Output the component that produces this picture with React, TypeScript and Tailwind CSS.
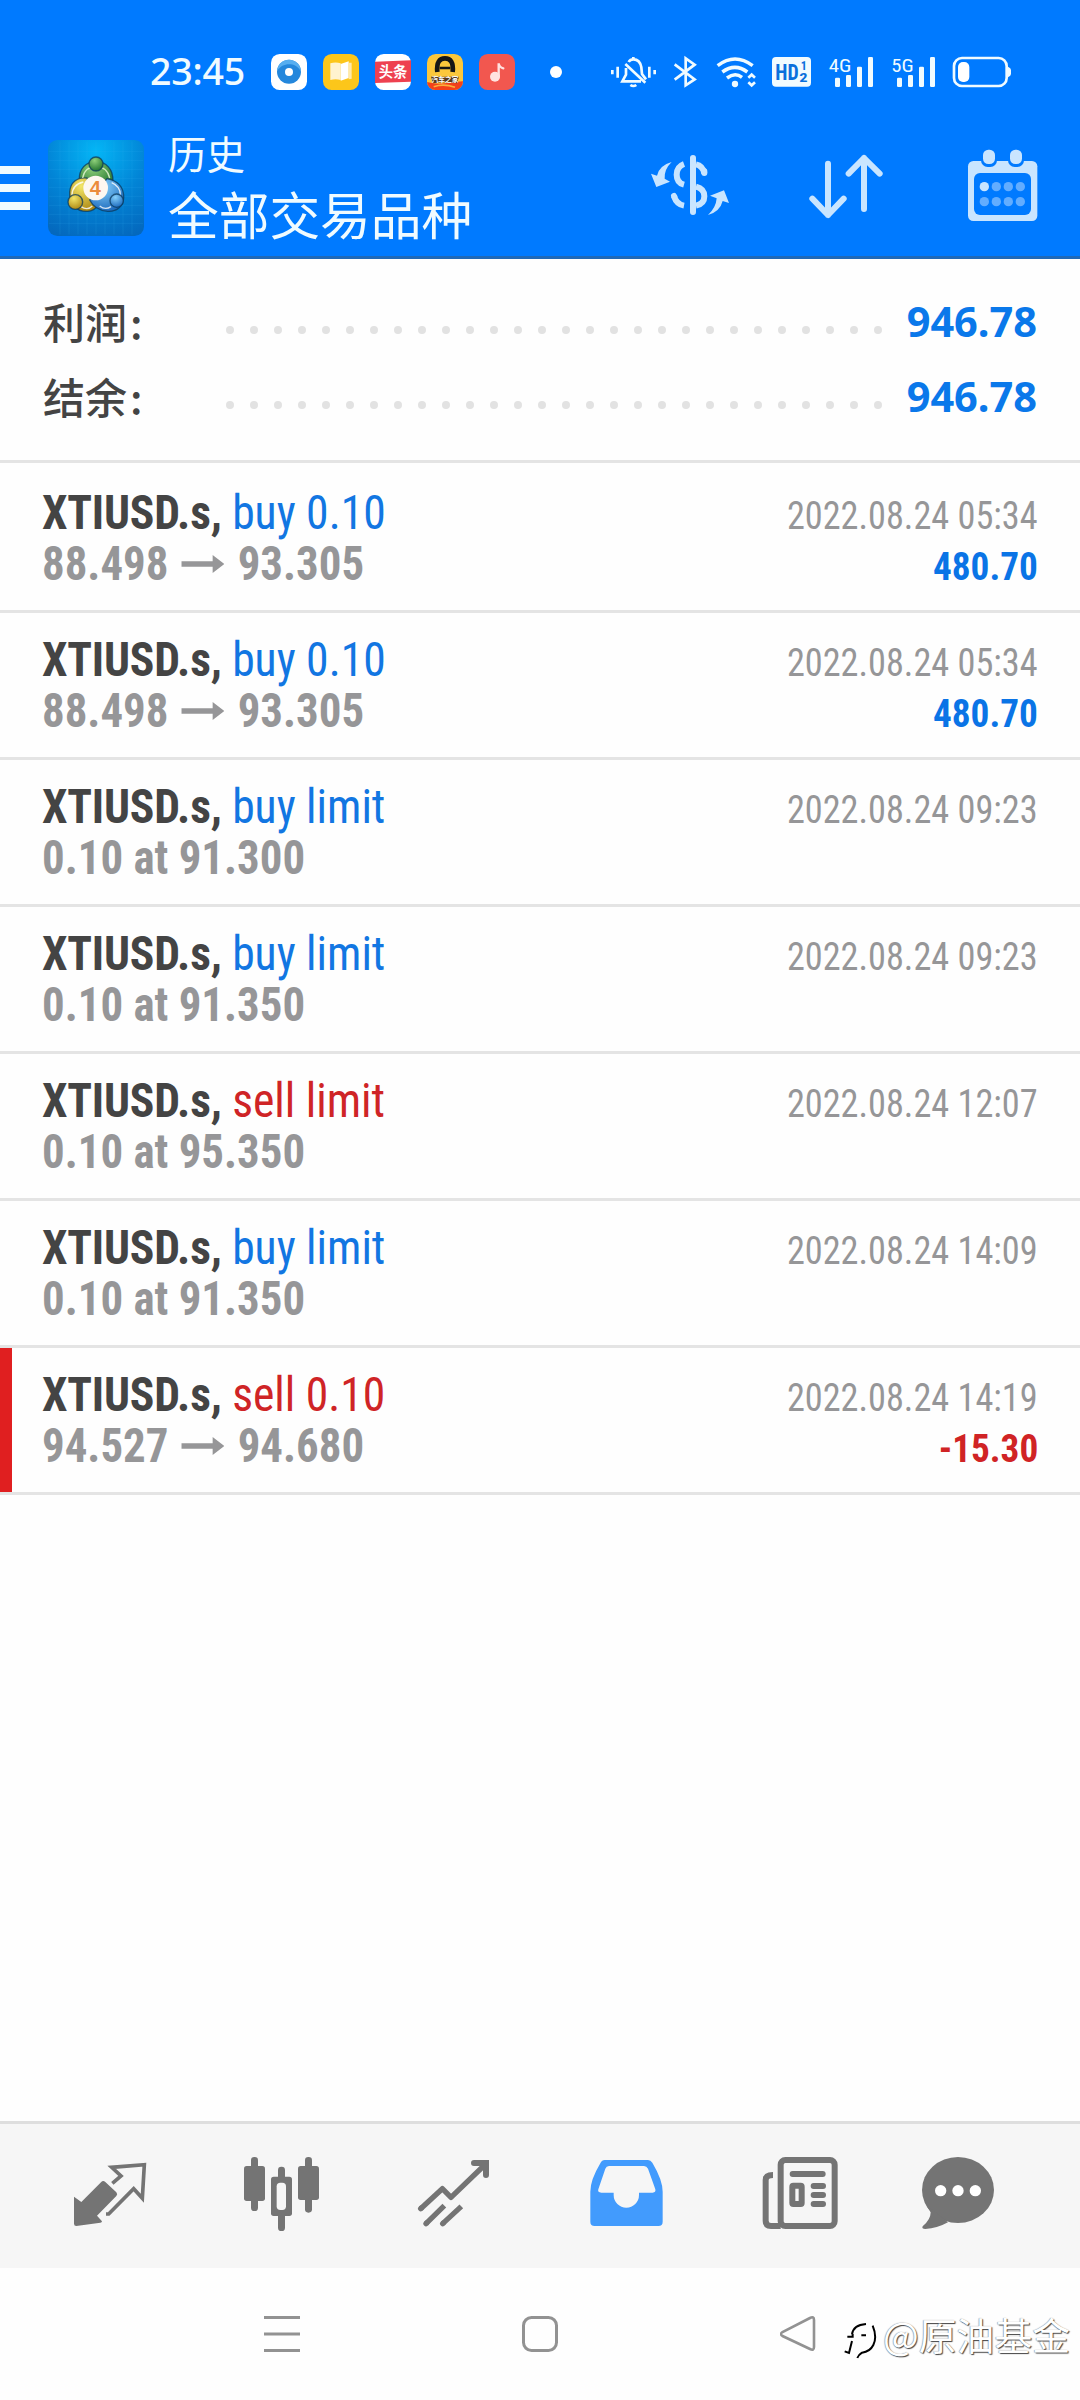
import React from 'react';
import { clsx } from 'clsx';

interface Deal {
  symbol: string;
  side: 'buy' | 'sell';
  action: string;
  from?: string;
  to?: string;
  price?: string;
  time: string;
  profit?: string;
}

const deals: Deal[] = [
  { symbol: 'XTIUSD.s,', side: 'buy', action: 'buy 0.10', from: '88.498', to: '93.305', time: '2022.08.24 05:34', profit: '480.70' },
  { symbol: 'XTIUSD.s,', side: 'buy', action: 'buy 0.10', from: '88.498', to: '93.305', time: '2022.08.24 05:34', profit: '480.70' },
  { symbol: 'XTIUSD.s,', side: 'buy', action: 'buy limit', price: '0.10 at 91.300', time: '2022.08.24 09:23' },
  { symbol: 'XTIUSD.s,', side: 'buy', action: 'buy limit', price: '0.10 at 91.350', time: '2022.08.24 09:23' },
  { symbol: 'XTIUSD.s,', side: 'sell', action: 'sell limit', price: '0.10 at 95.350', time: '2022.08.24 12:07' },
  { symbol: 'XTIUSD.s,', side: 'buy', action: 'buy limit', price: '0.10 at 91.350', time: '2022.08.24 14:09' },
  { symbol: 'XTIUSD.s,', side: 'sell', action: 'sell 0.10', from: '94.527', to: '94.680', time: '2022.08.24 14:19', profit: '-15.30' }
];

const AppIcons = () => (
  <div className="flex gap-4">
    <svg className="size-9" viewBox="0 0 108 108">
      <rect width="108" height="108" rx="26" fill="#fff" />
      <circle cx="54" cy="53" r="36" fill="#2487dc" />
      <path d="M54 17a36 36 0 0 1 36 36c-10-18-22-22-36-22s-26 6-36 20a36 36 0 0 1 36-34z" fill="#56aef0" />
      <circle cx="54" cy="54" r="12" fill="#fff" />
    </svg>
    <svg className="size-9" viewBox="0 0 108 108">
      <rect width="108" height="108" rx="26" fill="#fcc61a" />
      <path d="M22 28q16-5 31 0v50q-15-4-31 0z" fill="#fff3cf" />
      <path d="M53 30l24-8v50l-24 8z" fill="#fff" />
      <path d="M77 26h9v48l-9 2z" fill="#ffe9a8" />
    </svg>
    <svg className="size-9" viewBox="0 0 108 108">
      <rect width="108" height="108" rx="26" fill="#fff" />
      <path d="M0 23l108-4v64L0 87z" fill="#ee4150" />
      <text x="54" y="70" textAnchor="middle" fontSize="43" className="fill-white font-['Noto_Sans_CJK_SC',sans-serif] font-bold">头条</text>
    </svg>
    <svg className="size-9" viewBox="0 0 108 108">
      <defs><clipPath id="carClip"><rect width="108" height="108" rx="26" /></clipPath></defs>
      <g clipPath="url(#carClip)">
        <rect width="108" height="108" fill="#fbc73c" />
        <path d="M0 84q30 8 54 4t54-6v26H0z" fill="#f2411b" />
        <path d="M20 98q30-10 64 2" fill="none" stroke="#fbb03b" strokeWidth="5" />
        <path d="M31 54C28 24 38 13 54 13s26 11 23 41" fill="none" stroke="#161616" strokeWidth="14" />
        <path d="M38 42h32" stroke="#161616" strokeWidth="8" />
        <path d="M12 68h84l-6 20q-38-6-72 0z" fill="#5a3a1c" />
        <text x="54" y="84" textAnchor="middle" fontSize="20" className="fill-white font-['Noto_Sans_CJK_SC',sans-serif] font-bold">汽车之家</text>
      </g>
    </svg>
    <svg className="size-9" viewBox="0 0 108 108">
      <rect width="108" height="108" rx="26" fill="#f2574f" />
      <circle cx="48" cy="68" r="15" fill="#ffe3e0" />
      <path d="M59 68V28q2 12 14 15" fill="none" stroke="#ffe3e0" strokeWidth="7" strokeLinecap="round" />
    </svg>
  </div>
);

const StatusIcons = () => (
  <div className="flex h-12 fill-none stroke-[#f0fbff]">
    <svg className="h-12 w-[55px]" viewBox="240 24 165 144" strokeWidth="8">
      <path d="M247 90v13M263 80v33M358 80v33M374 90v13" />
      <path d="M296 66q4-8 14-8 20 0 24 24l2 20 12 16M288 84v20l-11 20h56M286 72l60 56" />
      <path d="M310 51v8M301 135q9 6 18 0" />
    </svg>
    <svg className="h-12 w-[41px]" viewBox="405 24 123 144" strokeWidth="8">
      <path d="M434 73l60 45-27 18V55l27 19-60 45" />
    </svg>
    <svg className="h-12 w-[58px]" viewBox="528 24 174 144" strokeWidth="10.5">
      <path d="M563 77q52-40 105 0M577 96q38-28 75 0M591 114q24-18 45-2" />
      <circle cx="615" cy="132" r="9.500" className="fill-[#f0fbff]" stroke="none" />
      <path d="M655 113l10-9 10 9M655 127l10 9 10-9" strokeWidth="8" />
    </svg>
    <svg className="h-12 w-[56px]" viewBox="702 24 168 144" stroke="none">
      <rect x="726" y="51" width="117" height="89" rx="12" className="fill-[#f0fbff]" />
      <g className="fill-[#0a70dc] font-['Roboto_Condensed',sans-serif] font-bold">
        <text x="736" y="119" fontSize="65" textLength="70" lengthAdjust="spacingAndGlyphs">HD</text>
        <text x="812" y="90" fontSize="36">1</text>
        <text x="808" y="125" fontSize="36" textLength="25" lengthAdjust="spacingAndGlyphs">2</text>
      </g>
    </svg>
    <svg className="h-12 w-[62px] fill-[#f0fbff]" viewBox="870 24 186 144" stroke="none">
      <text x="896" y="95" fontSize="56" textLength="68" lengthAdjust="spacingAndGlyphs" className="font-['Roboto_Condensed',sans-serif]">4G</text>
      <rect x="915" y="113" width="15" height="28" rx="4" />
      <rect x="948" y="105" width="15" height="36" rx="4" />
      <rect x="981" y="80" width="15" height="61" rx="4" />
      <rect x="1014" y="51" width="15" height="90" rx="4" />
    </svg>
    <svg className="h-12 w-[62px] fill-[#f0fbff]" viewBox="870 24 186 144" stroke="none">
      <text x="898" y="95" fontSize="56" textLength="67" lengthAdjust="spacingAndGlyphs" className="font-['Roboto_Condensed',sans-serif]">5G</text>
      <rect x="915" y="113" width="15" height="28" rx="4" />
      <rect x="948" y="105" width="15" height="36" rx="4" />
      <rect x="981" y="80" width="15" height="61" rx="4" />
      <rect x="1014" y="51" width="15" height="90" rx="4" />
    </svg>
    <svg className="h-12 w-[136px]" viewBox="1242 24 408 144" strokeWidth="8">
      <rect x="1272" y="54" width="158" height="84" rx="24" />
      <rect x="1284" y="66" width="34" height="60" rx="15" className="fill-white" stroke="none" />
      <path d="M1434 80q9 4 9 10v12q0 6-9 10z" className="fill-[#f0fbff]" stroke="none" />
    </svg>
  </div>
);

const Logo = () => (
  <svg className="ml-[18px] size-24" viewBox="145 56 288 288">
    <defs>
      <radialGradient id="logoBg" cx="0.5" cy="0.12" r="0.95">
        <stop offset="0" stopColor="#04b6f6" />
        <stop offset="0.55" stopColor="#0284d6" />
        <stop offset="1" stopColor="#0468bd" />
      </radialGradient>
      <radialGradient id="green" cx="0.4" cy="0.25" r="0.8"><stop offset="0" stopColor="#8fd07a" /><stop offset="1" stopColor="#1d6f2b" /></radialGradient>
      <radialGradient id="yellow" cx="0.4" cy="0.25" r="0.8"><stop offset="0" stopColor="#f3e668" /><stop offset="1" stopColor="#a98410" /></radialGradient>
      <radialGradient id="blue" cx="0.4" cy="0.25" r="0.8"><stop offset="0" stopColor="#86d0fb" /><stop offset="1" stopColor="#1765ba" /></radialGradient>
    </defs>
    <rect x="145" y="56" width="288" height="288" rx="28" fill="url(#logoBg)" />
    <path d="M181 60v280M208 60v280M235 60v280M262 60v280M289 60v280M316 60v280M343 60v280M370 60v280M397 60v280M148 90h282M148 117h282M148 144h282M148 171h282M148 198h282M148 225h282M148 252h282M148 279h282M148 306h282" stroke="#3fb4f0" strokeOpacity="0.22" strokeWidth="2" />
    <g stroke="#0b3a5c" strokeOpacity="0.75" strokeWidth="4">
      <path d="M239 178c-2-36 20-57 50-57s52 22 51 60l-8 20h-84z" fill="url(#green)" />
      <path d="M262 170c-30-4-50 14-52 42-2 36 22 60 54 58 14-1 24-8 32-18l-30-60z" fill="url(#yellow)" />
      <path d="M322 172c32 6 50 26 50 56 0 26-20 44-48 42-24-2-44-14-54-34z" fill="url(#blue)" />
      <path d="M249 170c4-22 18-34 40-34s36 12 41 34" fill="none" stroke="#e4f6d2" strokeOpacity="0.85" />
      <path d="M217 222c0-18 10-34 34-40M244 256c12 8 24 8 34-2" fill="none" stroke="#fff" strokeOpacity="0.8" />
      <path d="M336 184c18 8 27 22 26 38M300 254c10 8 22 10 34 2" fill="none" stroke="#fff" strokeOpacity="0.8" />
      <circle cx="289" cy="128" r="21" fill="url(#green)" />
      <circle cx="227" cy="242" r="22" fill="url(#yellow)" />
      <circle cx="351" cy="238" r="20" fill="url(#blue)" />
    </g>
    <circle cx="288" cy="200" r="37" fill="#fdf7f0" />
    <text x="287" y="221" textAnchor="middle" fontSize="60" className="fill-[#eb8b3c] font-['Liberation_Sans',sans-serif] font-bold">4</text>
  </svg>
);

const HeaderActions = () => (
  <div className="ml-auto flex fill-[#c9e5ff]">
    <svg className="h-[136px] w-[156px]" viewBox="-24 -30 468 408">
      <path d="M155 96Q118 106 111 137L93 131l16 40 41-16-16-9q-2-28 21-50zM264 255q36-10 44-42l19 6-15-38-42 16 20 8q-2 28-26 50z" />
      <path d="M192 102q-22 8-22 32t22 30M162 199q8 24 30 28M228 103q20 4 25 27M228 170q25 6 25 29t-25 28" fill="none" stroke="#c9e5ff" strokeWidth="18" />
      <path d="M253 124v5M163 200l-1-2M219 84v162" fill="none" stroke="#c9e5ff" strokeWidth="18" strokeLinecap="round" />
    </svg>
    <svg className="h-[136px] w-[156px]" viewBox="444 -30 468 408">
      <path d="M624 101v154M577 206l47 49 47-49M732 237V84M686 131l46-47 47 47" fill="none" stroke="#c9e5ff" strokeWidth="18" strokeLinecap="round" strokeLinejoin="round" />
    </svg>
    <svg className="h-[136px] w-[156px]" viewBox="912 -30 468 408">
      <rect x="1044" y="93" width="208" height="180" rx="16" />
      <rect x="1062" y="129" width="171" height="126" rx="18" fill="#007aff" />
      <rect x="1083" y="53" width="48" height="58" rx="20" fill="#007aff" />
      <rect x="1164" y="53" width="48" height="58" rx="20" fill="#007aff" />
      <rect x="1089" y="59" width="36" height="43" rx="16" />
      <rect x="1170" y="59" width="36" height="43" rx="16" />
      <circle cx="1093" cy="170" r="14" />
      <g fill="#63adff">
        <circle cx="1129" cy="170" r="14" /><circle cx="1165" cy="170" r="14" /><circle cx="1201" cy="170" r="14" />
        <circle cx="1093" cy="215" r="14" /><circle cx="1129" cy="215" r="14" /><circle cx="1165" cy="215" r="14" /><circle cx="1201" cy="215" r="14" />
      </g>
    </svg>
  </div>
);

const Header = () => (
  <header className="h-[259px] border-b-[3px] border-[#1f69b8] bg-[#007aff]">
    <div className="flex h-[120px] items-center pt-6 pl-[150px]">
      <div className="w-[121px] pb-0.5 font-['Noto_Sans',sans-serif] text-[37.5px] leading-none font-medium tracking-[-0.2px] text-[#f0fbff]">23:45</div>
      <AppIcons />
      <div className="mr-12 ml-[35px] size-3 rounded-full bg-white" />
      <StatusIcons />
    </div>
    <div className="flex h-[136px] items-center">
      <div className="flex w-[30px] flex-col gap-2.5">
        <div className="h-2 bg-[#f0fbff]" />
        <div className="h-2 bg-[#f0fbff]" />
        <div className="h-2 bg-[#f0fbff]" />
      </div>
      <Logo />
      <div className="ml-6 pb-[11px] font-['Noto_Sans_CJK_SC',sans-serif] text-[#f0fbff]">
        <div className="text-[38.5px] leading-[61px]">历史</div>
        <div className="text-[50.7px] leading-[61px]">全部交易品种</div>
      </div>
      <HeaderActions />
    </div>
  </header>
);

const SummaryRow = ({ label, value }: { label: string; value: string }) => (
  <div className="flex h-[75px] items-center">
    <div className="w-[183px] pb-[5px] font-['Noto_Sans_CJK_SC',sans-serif] text-[42px] font-medium text-[#444]">
      {label}<span className="ml-[3px]">:</span>
    </div>
    <svg className="mt-3.5 h-2 w-[656px]" viewBox="0 0 656 8">
      <path d="M4 4h650" stroke="#e2e2e2" strokeWidth="8" strokeLinecap="round" strokeDasharray="0 24" />
    </svg>
    <div className="ml-auto pb-[3px] font-['Noto_Sans',sans-serif] text-[41.5px] font-bold text-[#0a78ea]">{value}</div>
  </div>
);

const DealRow = ({ deal }: { deal: Deal }) => {
  const isLoss = deal.profit?.startsWith('-');

  return (
    <div
      className={clsx(
        'h-[147px] border-b-[3px] border-[#e4e4e4] px-[42px] pt-[21px] first:h-[150px] first:pt-6',
        isLoss && 'shadow-[inset_12px_0_0_#e01f20]'
      )}
    >
      <div className="flex h-[51px] items-baseline justify-between leading-[51px]">
        <div className={clsx('origin-left scale-x-[0.95] text-[48px]', deal.side === 'buy' ? 'text-[#1276e2]' : 'text-[#cf2426]')}>
          <span className="font-bold tracking-[-0.2px] text-[#444]">{deal.symbol}</span> {deal.action}
        </div>
        <div className="origin-right scale-x-[0.93] text-[39px] text-[#969698]">{deal.time}</div>
      </div>
      <div className="flex h-[51px] items-baseline justify-between leading-[51px] font-bold">
        <div className="flex origin-left scale-x-[0.935] items-center text-[48px] text-[#969698]">
          {deal.price}
          {deal.from}
          {deal.to && (
            <>
              <svg className="mx-3.5 h-[18px] w-[46px]" viewBox="0 0 129 54" preserveAspectRatio="none">
                <path d="M0 19h94V0l35 27-35 27V35H0z" fill="#969698" />
              </svg>
              {deal.to}
            </>
          )}
        </div>
        <div className={clsx('origin-right scale-x-[0.955] text-[39px]', isLoss ? 'text-[#d02325]' : 'text-[#0a74e6]')}>{deal.profit}</div>
      </div>
    </div>
  );
};

const TabBar = () => (
  <nav className="flex h-[147px] border-t-[3px] border-[#dedede] bg-[#f6f6f6] fill-[#747474] pl-6">
    <svg className="h-36 w-[172px]" viewBox="-48 42 516 432">
      <path d="M102 260l22 16 59-59q6-7 13-1l33 31q5 6 0 11l-58 59 15 17q0 4-5 4l-72 10q-7 0-7-7z" />
      <path d="M217 220l26-22-28-26 98-8-6 101-26-29-75 76h-8" fill="none" stroke="#747474" strokeWidth="11" />
    </svg>
    <svg className="h-36 w-[172px]" viewBox="468 42 516 432">
      <rect x="612" y="168" width="63" height="105" rx="8" />
      <rect x="633" y="141" width="21" height="162" rx="10" />
      <rect x="774" y="168" width="63" height="102" rx="8" />
      <rect x="795" y="141" width="21" height="167" rx="10" />
      <rect x="714" y="170" width="21" height="193" rx="10" />
      <rect x="693" y="200" width="63" height="118" rx="8" />
      <rect x="710" y="218" width="28" height="82" rx="11" fill="#f6f6f6" />
    </svg>
    <svg className="h-36 w-[172px]" viewBox="984 42 516 432">
      <g fill="none" stroke="#747474">
        <path d="M1142 296l65-60 26 26 104-100M1158 341l55-54M1208 341l56-52" strokeWidth="16" strokeLinejoin="round" />
        <path d="M1142 296l2-2M1158 341l2-2M1208 341l2-2" strokeWidth="16" strokeLinecap="round" />
        <path d="M1302 159h36v36" strokeWidth="18" strokeLinecap="round" />
      </g>
    </svg>
    <svg className="h-36 w-[172px]" viewBox="0 42 516 432">
      <path
        fillRule="evenodd"
        fill="#429bfd"
        d="M194 150h130q8 0 13 8 31 52 31 87v90q0 13-13 13H164q-13 0-13-13v-90q0-35 30-85 5-10 13-10zM207 168q-8 0-11 8l-21 62q-3 10 9 10h37v7a38 38 0 0 0 76 0v-7h41q10 0 8-10l-22-62q-4-8-12-8z"
      />
    </svg>
    <svg className="h-36 w-[172px]" viewBox="516 42 516 432">
      <g fill="none" stroke="#747474" strokeWidth="18">
        <rect x="722" y="150" width="162" height="198" rx="14" />
        <path d="M699 195q-22 0-22 15v122q0 16 16 16h29" />
        <path d="M758 192h90M821 228h28M821 255h28M821 282h28" strokeLinecap="round" />
        <rect x="757" y="227" width="28" height="55" rx="3" />
      </g>
    </svg>
    <svg className="h-36 w-[172px]" viewBox="1032 42 516 432">
      <ellipse cx="1254" cy="240" rx="108" ry="99" />
      <path d="M1158 285l14 22q0 22-24 42-4 8 8 8 36-2 68-20z" />
      <g fill="#fff"><circle cx="1202" cy="242" r="17" /><circle cx="1254" cy="242" r="17" /><circle cx="1306" cy="242" r="17" /></g>
    </svg>
  </nav>
);

const SystemNav = () => (
  <div className="relative flex h-[132px] items-center justify-center gap-[222px] fill-none stroke-[#929292]">
    <svg className="size-9" viewBox="0 0 36 36" strokeWidth="3"><path d="M0 1.5h36M0 18h36M0 34.5h36" /></svg>
    <svg className="size-9" viewBox="0 0 36 36" strokeWidth="3"><rect x="1.5" y="1.5" width="33" height="33" rx="8" /></svg>
    <svg className="size-9" viewBox="0 0 36 36" strokeWidth="2.6"><path d="M30 2Q34 0 34 4v27q0 4-4 2L2.500 20q-3-2 0-4z" /></svg>
    <div className="absolute top-[41px] right-[10px] flex items-center">
      <svg className="mt-3 mr-1.5 h-[38px] w-[37px] stroke-black" viewBox="210 76 111 114" strokeWidth="6">
        <path d="M246 116q4-28 42-31M232 123h16v-8M274 119h14M224 167l13 5 9-36M308 90q14 34 2 58-10 20-34 23-10 6-14 16" />
      </svg>
      <span className="font-['Noto_Sans_CJK_SC',sans-serif] text-[37.8px] leading-[50px] text-white [text-shadow:1px_1px_1px_#444,-0.5px_-0.5px_1px_#888]">@原油基金</span>
    </div>
  </div>
);

export default function App() {
  return (
    <div className="flex h-[2400px] w-[1080px] flex-col overflow-hidden bg-[#fefefe] font-['Roboto_Condensed',Roboto,sans-serif]">
      <Header />
      <section className="h-[204px] border-b-[3px] border-[#e4e4e4] px-[43px] pt-[26px]">
        <SummaryRow label="利润" value="946.78" />
        <SummaryRow label="结余" value="946.78" />
      </section>
      <main className="flex-1">
        {deals.map((deal, i) => (
          <DealRow key={i} deal={deal} />
        ))}
      </main>
      <TabBar />
      <SystemNav />
    </div>
  );
}
